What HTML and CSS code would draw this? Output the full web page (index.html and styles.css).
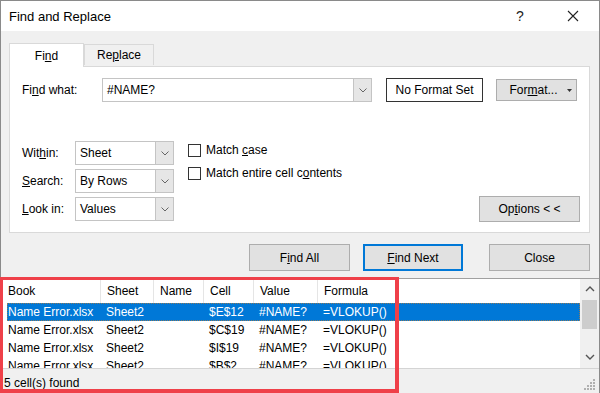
FILE: index.html
```html
<!DOCTYPE html>
<html lang="en">
<head>
    <meta charset="UTF-8">
    <meta name="viewport" content="width=device-width, initial-scale=1.0">
    <title>Find and Replace</title>
    <link rel="stylesheet" href="styles.css">
</head>
<body>
    <div class="window">
        <!-- Title bar -->
        <div class="titlebar">
            <span class="title">Find and Replace</span>
            <span class="help">?</span>
            <span class="close-x">
                <svg width="12" height="12" viewBox="0 0 12 12"><path d="M1 1 L11 11 M11 1 L1 11" stroke="#222" stroke-width="1.1" fill="none"/></svg>
            </span>
        </div>

        <div class="content">
            <!-- Tabs -->
            <div class="tabs">
                <div class="tab tab-active"><span>Fi<u>n</u>d</span></div>
                <div class="tab"><span>Re<u>p</u>lace</span></div>
            </div>

            <!-- Find panel -->
            <div class="panel">
                <div class="find-row">
                    <label class="find-label">Fi<u>n</u>d what:</label>
                    <div class="combo combo-wide">
                        <span class="combo-text">#NAME?</span>
                        <span class="combo-arrow">
                            <svg width="8" height="5" viewBox="0 0 8 5"><path d="M0.5 0.5 L4 4 L7.5 0.5" stroke="#666" fill="none"/></svg>
                        </span>
                    </div>
                    <div class="format-preview">No Format Set</div>
                    <div class="btn btn-format">
                        <span>For<u>m</u>at...</span>
                        <svg class="caret" width="5" height="3" viewBox="0 0 5 3"><path d="M0 0 H5 L2.5 3 Z" fill="#333"/></svg>
                    </div>
                </div>

                <div class="options-row">
                    <div class="selects">
                        <label>Wit<u>h</u>in:</label>
                        <div class="combo combo-small">
                            <span class="combo-text">Sheet</span>
                            <span class="combo-arrow">
                                <svg width="8" height="5" viewBox="0 0 8 5"><path d="M0.5 0.5 L4 4 L7.5 0.5" stroke="#666" fill="none"/></svg>
                            </span>
                        </div>
                        <label><u>S</u>earch:</label>
                        <div class="combo combo-small">
                            <span class="combo-text">By Rows</span>
                            <span class="combo-arrow">
                                <svg width="8" height="5" viewBox="0 0 8 5"><path d="M0.5 0.5 L4 4 L7.5 0.5" stroke="#666" fill="none"/></svg>
                            </span>
                        </div>
                        <label><u>L</u>ook in:</label>
                        <div class="combo combo-small">
                            <span class="combo-text">Values</span>
                            <span class="combo-arrow">
                                <svg width="8" height="5" viewBox="0 0 8 5"><path d="M0.5 0.5 L4 4 L7.5 0.5" stroke="#666" fill="none"/></svg>
                            </span>
                        </div>
                    </div>

                    <div class="checks">
                        <div class="check"><span class="box"></span><span>Match <u>c</u>ase</span></div>
                        <div class="check"><span class="box"></span><span>Match entire cell c<u>o</u>ntents</span></div>
                    </div>

                    <div class="btn btn-options"><span>Op<u>t</u>ions &lt; &lt;</span></div>
                </div>
            </div>

            <!-- Action buttons -->
            <div class="actions">
                <div class="btn btn-action btn-findall"><span>F<u>i</u>nd All</span></div>
                <div class="btn btn-action btn-findnext"><span><u>F</u>ind Next</span></div>
                <div class="btn btn-action">Close</div>
            </div>
        </div>

        <!-- Results list -->
        <div class="results">
            <div class="grid">
                <div class="row header">
                    <span class="c-book">Book</span>
                    <span class="c-sheet">Sheet</span>
                    <span class="c-name">Name</span>
                    <span class="c-cell">Cell</span>
                    <span class="c-value">Value</span>
                    <span class="c-formula">Formula</span>
                </div>
                <div class="row selected">
                    <span class="c-book">Name Error.xlsx</span>
                    <span class="c-sheet">Sheet2</span>
                    <span class="c-name"></span>
                    <span class="c-cell">$E$12</span>
                    <span class="c-value">#NAME?</span>
                    <span class="c-formula">=VLOKUP()</span>
                </div>
                <div class="row">
                    <span class="c-book">Name Error.xlsx</span>
                    <span class="c-sheet">Sheet2</span>
                    <span class="c-name"></span>
                    <span class="c-cell">$C$19</span>
                    <span class="c-value">#NAME?</span>
                    <span class="c-formula">=VLOKUP()</span>
                </div>
                <div class="row">
                    <span class="c-book">Name Error.xlsx</span>
                    <span class="c-sheet">Sheet2</span>
                    <span class="c-name"></span>
                    <span class="c-cell">$I$19</span>
                    <span class="c-value">#NAME?</span>
                    <span class="c-formula">=VLOKUP()</span>
                </div>
                <div class="row">
                    <span class="c-book">Name Error.xlsx</span>
                    <span class="c-sheet">Sheet2</span>
                    <span class="c-name"></span>
                    <span class="c-cell">$B$2</span>
                    <span class="c-value">#NAME?</span>
                    <span class="c-formula">=VLOKUP()</span>
                </div>
            </div>
            <div class="scrollbar">
                <span class="scroll-btn">
                    <svg width="10" height="6" viewBox="0 0 10 6"><path d="M1 5 L5 1 L9 5" stroke="#555" stroke-width="1.4" fill="none"/></svg>
                </span>
                <span class="thumb"></span>
                <span class="scroll-btn scroll-down">
                    <svg width="10" height="6" viewBox="0 0 10 6"><path d="M1 1 L5 5 L9 1" stroke="#555" stroke-width="1.4" fill="none"/></svg>
                </span>
            </div>
        </div>

        <!-- Status bar -->
        <div class="statusbar">
            <span>5 cell(s) found</span>
            <svg class="grip" width="12" height="12" viewBox="0 0 12 12">
                <rect x="9" y="1" width="2" height="2" fill="#b0b0b0"/>
                <rect x="6" y="4" width="2" height="2" fill="#b0b0b0"/>
                <rect x="9" y="4" width="2" height="2" fill="#b0b0b0"/>
                <rect x="3" y="7" width="2" height="2" fill="#b0b0b0"/>
                <rect x="6" y="7" width="2" height="2" fill="#b0b0b0"/>
                <rect x="9" y="7" width="2" height="2" fill="#b0b0b0"/>
                <rect x="0" y="10" width="2" height="2" fill="#b0b0b0"/>
                <rect x="3" y="10" width="2" height="2" fill="#b0b0b0"/>
                <rect x="6" y="10" width="2" height="2" fill="#b0b0b0"/>
                <rect x="9" y="10" width="2" height="2" fill="#b0b0b0"/>
            </svg>
        </div>
    </div>

    <!-- Red highlight annotation over the results -->
    <div class="annotation"></div>
</body>
</html>
```

FILE: styles.css
```css
/* Base */
body {
    margin: 0;
    width: 600px;
    height: 393px;
    overflow: hidden;
    position: relative;
    font-family: "Segoe UI", "Liberation Sans", Arial, sans-serif;
    font-size: 12px;
    color: #000;
    background-color: #f0f0f0;
}

u {
    text-underline-offset: 1px;
}

/* Dialog window */
.window {
    width: 600px;
    height: 393px;
    box-sizing: border-box;
    border: 1px solid #8a8a8a;
    border-bottom: none;
    background-color: #f0f0f0;
    display: flex;
    flex-direction: column;
}

/* Title bar */
.titlebar {
    height: 30px;
    background-color: #fff;
    display: flex;
    align-items: center;
    padding-left: 8px;
}

.title {
    font-size: 13px;
    flex: 1;
}

.help {
    font-size: 14px;
    width: 14px;
    margin-right: 37px;
    color: #222;
}

.close-x {
    display: flex;
    margin-right: 20px;
}

/* Upper content */
.content {
    padding: 0 9px 0 8px;
}

.tabs {
    display: flex;
    align-items: flex-end;
    margin-top: 12px;
}

.tab {
    width: 68px;
    height: 20px;
    border: 1px solid #d9d9d9;
    border-bottom: none;
    display: flex;
    align-items: center;
    justify-content: center;
    background-color: #f0f0f0;
    margin-bottom: 1px;
}

.tab-active {
    width: 73px;
    height: 23px;
    background-color: #fff;
    margin-bottom: -1px;
    position: relative;
    z-index: 1;
}

/* Find panel */
.panel {
    border: 1px solid #d9d9d9;
    background-color: #fff;
    padding: 11px 0 0 12px;
    box-sizing: border-box;
    height: 167px;
}

.find-row {
    display: flex;
    align-items: center;
}

.find-label {
    width: 80px;
}

.combo {
    height: 24px;
    box-sizing: border-box;
    border: 1px solid #c4c4c4;
    display: flex;
    background-color: #fff;
}

.combo-wide {
    width: 270px;
}

.combo-small {
    width: 99px;
}

.combo-text {
    flex: 1;
    padding-left: 4px;
    line-height: 22px;
}

.combo-arrow {
    width: 17px;
    border-left: 1px solid #c4c4c4;
    background-color: #e6e6e6;
    display: flex;
    align-items: center;
    justify-content: center;
}

.format-preview {
    margin-left: 14px;
    width: 97px;
    height: 24px;
    box-sizing: border-box;
    border: 1px solid #333;
    display: flex;
    align-items: center;
    justify-content: center;
}

/* Buttons */
.btn {
    box-sizing: border-box;
    border: 1px solid #adadad;
    background-color: #e1e1e1;
    display: flex;
    align-items: center;
    justify-content: center;
}

.btn-format {
    margin-left: 13px;
    width: 81px;
    height: 22px;
    position: relative;
    padding-right: 6px;
}

.caret {
    position: absolute;
    right: 4px;
    top: 9px;
}

/* Options area */
.options-row {
    display: flex;
    margin-top: 39px;
}

.selects {
    display: grid;
    grid-template-columns: 53px 99px;
    row-gap: 4px;
    align-items: center;
}

.checks {
    margin-left: 14px;
    padding-top: 2px;
    display: flex;
    flex-direction: column;
    gap: 9px;
}

.check {
    display: flex;
    align-items: center;
    height: 14px;
}

.box {
    width: 13px;
    height: 13px;
    box-sizing: border-box;
    border: 1px solid #333;
    background-color: #fff;
    margin-right: 5px;
}

.btn-options {
    margin-left: auto;
    margin-right: 9px;
    align-self: flex-end;
    width: 101px;
    height: 26px;
    margin-bottom: -1px;
}

/* Action buttons */
.actions {
    display: flex;
    justify-content: flex-end;
    margin-top: 11px;
}

.btn-action {
    width: 101px;
    height: 27px;
}

.btn-findall {
    margin-right: 13px;
}

.btn-findnext {
    width: 100px;
    margin-right: 26px;
    border: 2px solid #0078d7;
}

/* Results list */
.results {
    margin-top: 7px;
    height: 89px;
    border-top: 1px solid #a0a0a0;
    background-color: #fff;
    display: flex;
    overflow: hidden;
}

.grid {
    flex: 1;
    padding-left: 6px;
}

.row {
    display: flex;
    height: 18px;
    align-items: center;
}

.row span {
    box-sizing: border-box;
    padding-left: 6px;
    white-space: nowrap;
}

.header {
    height: 24px;
}

.header span {
    height: 24px;
    line-height: 24px;
}

.header span + span {
    border-left: 1px solid #e5e5e5;
}

.c-book {
    width: 93px;
    padding-left: 1px !important;
}

.c-sheet { width: 53px; }
.c-name { width: 50px; }
.c-cell { width: 50px; }
.c-value { width: 64px; }
.c-formula { flex: 1; }

.selected {
    background-color: #0078d7;
    color: #fff;
    box-sizing: border-box;
    outline: 1px dotted #8a7a5e;
    outline-offset: -1px;
}

.scrollbar {
    width: 19px;
    background-color: #f0f0f0;
    display: flex;
    flex-direction: column;
    align-items: center;
}

.scroll-btn {
    height: 19px;
    display: flex;
    align-items: center;
    justify-content: center;
}

.thumb {
    width: 15px;
    height: 29px;
    margin-top: 2px;
    background-color: #cdcdcd;
}

.scroll-down {
    margin-top: auto;
    height: 22px;
}

/* Status bar */
.statusbar {
    flex: 1;
    border-top: 1px solid #d4d4d4;
    display: flex;
    align-items: center;
    padding: 3px 3px 0 3px;
}

.grip {
    margin-left: auto;
    margin-top: 3px;
}

/* Annotation overlay */
.annotation {
    position: absolute;
    left: 0;
    top: 277px;
    width: 399px;
    height: 116px;
    box-sizing: border-box;
    border: 3px solid #ef4049;
    border-right-width: 4px;
    border-bottom-width: 4px;
}
```
